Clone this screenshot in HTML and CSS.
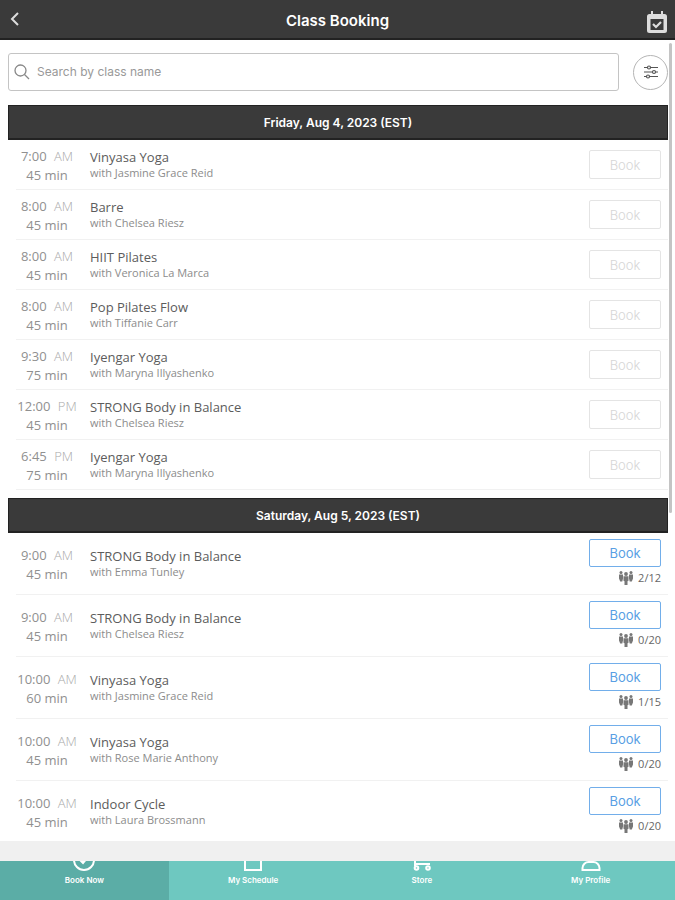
FILE: index.html
```html
<!DOCTYPE html>
<html lang="en">
<head>
<meta charset="utf-8">
<meta name="viewport" content="width=device-width, initial-scale=1">
<title>Class Booking</title>
<link rel="stylesheet" href="styles.css">
</head>
<body>
<svg class="sprite" aria-hidden="true">
  <symbol id="people" viewBox="0 0 14 14">
    <circle cx="2" cy="1.500" r="1.500"/><circle cx="12" cy="1.500" r="1.500"/><circle cx="7" cy="3" r="1.900"/>
    <path d="M0 3.500h4v4l-.7 3H1.200L0 7.500zM10 3.500h4v4l-1.200 3h-2.100l-.7-3zM4.500 5.300h5v4.500l-1 .4V14h-3v-3.800l-1-.4z"/>
  </symbol>
</svg>
<header class="topbar">
  <button class="icon-button" type="button" aria-label="Back">
    <svg width="12" height="16" viewBox="0 0 12 16"><path d="M10 2 4 8l6 6" fill="none" stroke="currentColor" stroke-width="2"/></svg>
  </button>
  <h1 class="title">Class Booking</h1>
  <button class="icon-button calendar" type="button" aria-label="My calendar">
    <svg width="20" height="23" viewBox="0 0 20 23"><path fill="currentColor" fill-rule="evenodd" d="M4 0h2v3h8V0h2v3h1.500a2.500 2.500 0 0 1 2.500 2.500v14a2.500 2.500 0 0 1-2.500 2.500h-15A2.500 2.500 0 0 1 0 19.500v-14A2.500 2.500 0 0 1 2.500 3H4zM3.500 8v11h13V8z"/><path d="m6 13 3 3 5-5" fill="none" stroke="currentColor" stroke-width="2.200"/></svg>
  </button>
</header>
<main class="content">
  <div class="tools">
    <label class="search">
      <svg width="16" height="16" viewBox="0 0 16 16" fill="none" stroke="currentColor" stroke-width="1.300"><circle cx="6.500" cy="6.500" r="5.500"/><path d="m10.500 10.500 4.500 4.500"/></svg>
      <input class="search-input" type="search" placeholder="Search by class name" aria-label="Search by class name">
    </label>
    <button class="filter" type="button" aria-label="Filter">
      <svg width="14" height="14" viewBox="0 0 14 14" fill="#fff" stroke="currentColor" stroke-width="1.200"><path d="M0 2.500h14M0 7h14M0 11.500h14"/><circle cx="5" cy="2.500" r="1.500"/><circle cx="10" cy="7" r="1.500"/><circle cx="4" cy="11.500" r="1.500"/></svg>
    </button>
  </div>

  <section class="day">
    <h2 class="date">Friday, Aug 4, 2023 (EST)</h2>
    <ul class="classes">
      <li class="class"><div class="when"><span>7:00 <span class="period">AM</span></span><span>45 min</span></div><div class="info"><h3 class="name">Vinyasa Yoga</h3><p class="coach">with Jasmine Grace Reid</p></div><div class="action"><button class="book" type="button" disabled>Book</button></div></li>
      <li class="class"><div class="when"><span>8:00 <span class="period">AM</span></span><span>45 min</span></div><div class="info"><h3 class="name">Barre</h3><p class="coach">with Chelsea Riesz</p></div><div class="action"><button class="book" type="button" disabled>Book</button></div></li>
      <li class="class"><div class="when"><span>8:00 <span class="period">AM</span></span><span>45 min</span></div><div class="info"><h3 class="name">HIIT Pilates</h3><p class="coach">with Veronica La Marca</p></div><div class="action"><button class="book" type="button" disabled>Book</button></div></li>
      <li class="class"><div class="when"><span>8:00 <span class="period">AM</span></span><span>45 min</span></div><div class="info"><h3 class="name">Pop Pilates Flow</h3><p class="coach">with Tiffanie Carr</p></div><div class="action"><button class="book" type="button" disabled>Book</button></div></li>
      <li class="class"><div class="when"><span>9:30 <span class="period">AM</span></span><span>75 min</span></div><div class="info"><h3 class="name">Iyengar Yoga</h3><p class="coach">with Maryna Illyashenko</p></div><div class="action"><button class="book" type="button" disabled>Book</button></div></li>
      <li class="class"><div class="when"><span>12:00 <span class="period">PM</span></span><span>45 min</span></div><div class="info"><h3 class="name">STRONG Body in Balance</h3><p class="coach">with Chelsea Riesz</p></div><div class="action"><button class="book" type="button" disabled>Book</button></div></li>
      <li class="class"><div class="when"><span>6:45 <span class="period">PM</span></span><span>75 min</span></div><div class="info"><h3 class="name">Iyengar Yoga</h3><p class="coach">with Maryna Illyashenko</p></div><div class="action"><button class="book" type="button" disabled>Book</button></div></li>
    </ul>
  </section>

  <section class="day">
    <h2 class="date">Saturday, Aug 5, 2023 (EST)</h2>
    <ul class="classes">
      <li class="class open"><div class="when"><span>9:00 <span class="period">AM</span></span><span>45 min</span></div><div class="info"><h3 class="name">STRONG Body in Balance</h3><p class="coach">with Emma Tunley</p></div><div class="action"><button class="book" type="button">Book</button><span class="spots"><svg class="people"><use href="#people"/></svg>2/12</span></div></li>
      <li class="class open"><div class="when"><span>9:00 <span class="period">AM</span></span><span>45 min</span></div><div class="info"><h3 class="name">STRONG Body in Balance</h3><p class="coach">with Chelsea Riesz</p></div><div class="action"><button class="book" type="button">Book</button><span class="spots"><svg class="people"><use href="#people"/></svg>0/20</span></div></li>
      <li class="class open"><div class="when"><span>10:00 <span class="period">AM</span></span><span>60 min</span></div><div class="info"><h3 class="name">Vinyasa Yoga</h3><p class="coach">with Jasmine Grace Reid</p></div><div class="action"><button class="book" type="button">Book</button><span class="spots"><svg class="people"><use href="#people"/></svg>1/15</span></div></li>
      <li class="class open"><div class="when"><span>10:00 <span class="period">AM</span></span><span>45 min</span></div><div class="info"><h3 class="name">Vinyasa Yoga</h3><p class="coach">with Rose Marie Anthony</p></div><div class="action"><button class="book" type="button">Book</button><span class="spots"><svg class="people"><use href="#people"/></svg>0/20</span></div></li>
      <li class="class open"><div class="when"><span>10:00 <span class="period">AM</span></span><span>45 min</span></div><div class="info"><h3 class="name">Indoor Cycle</h3><p class="coach">with Laura Brossmann</p></div><div class="action"><button class="book" type="button">Book</button><span class="spots"><svg class="people"><use href="#people"/></svg>0/20</span></div></li>
    </ul>
  </section>
  <div class="scroll-thumb"></div>
</main>
<nav class="tabs" aria-label="Main">
  <a class="tab active" href="#book"><svg class="tab-icon" viewBox="0 0 24 10"><circle cx="12" cy="-1" r="10"/><path d="m8-1 3 3 5-6"/></svg>Book Now</a>
  <a class="tab" href="#schedule"><svg class="tab-icon" viewBox="0 0 24 10"><path d="M4-4V9h16V-4"/></svg>My Schedule</a>
  <a class="tab" href="#store"><svg class="tab-icon" viewBox="0 0 24 10"><path d="M5-2v7M5 3h15"/><circle cx="6.500" cy="7" r="1.800"/><circle cx="18" cy="7" r="1.800"/></svg>Store</a>
  <a class="tab" href="#profile"><svg class="tab-icon" viewBox="0 0 24 10"><path d="M3.500 9v-2c0-3.500 3-6 6-6h5c3 0 6 2.500 6 6v2z"/></svg>My Profile</a>
</nav>
</body>
</html>
```

FILE: styles.css
```css
* { box-sizing: border-box; }

body {
  margin: 0;
  height: 100vh;
  display: flex;
  flex-direction: column;
  overflow: hidden;
  background: #fff;
  color: #555;
  font-family: "Open Sans", sans-serif;
}

h1, h2, h3, p, ul { margin: 0; padding: 0; }
ul { list-style: none; }
button { padding: 0; font: inherit; cursor: pointer; }

.sprite { display: none; }

.topbar {
  flex: none;
  height: 40px;
  display: grid;
  grid-template-columns: 40px 1fr 40px;
  align-items: center;
  padding: 0 8px;
  background: #3a3a3a;
  border-bottom: 2px solid #222;
  color: #fff;
}

.title {
  padding-top: 4px;
  text-align: center;
  font: 600 15px/20px Inter, sans-serif;
}

.icon-button {
  justify-self: start;
  display: flex;
  border: 0;
  background: none;
  color: #ddd;
}

.calendar { justify-self: end; padding-top: 6px; }

.content {
  position: relative;
  flex: 1;
  min-height: 0;
  overflow: hidden;
  padding: 13px 7px 0 8px;
}

.tools {
  display: flex;
  align-items: center;
  gap: 14px;
  margin-bottom: 14px;
}

.search {
  flex: 1;
  height: 38px;
  display: flex;
  align-items: center;
  gap: 7px;
  padding: 0 5px;
  border: 1px solid #c4c4c4;
  border-radius: 3px;
  color: #888;
}

.search-input {
  flex: 1;
  min-width: 0;
  padding: 0;
  border: 0;
  outline: 0;
  background: none;
  color: #555;
  font: 400 12px/20px Inter, sans-serif;
}

.search-input::placeholder { color: #999; opacity: 1; }

.filter {
  width: 35px;
  height: 35px;
  display: flex;
  align-items: center;
  justify-content: center;
  border: 1px solid #b5b5b5;
  border-radius: 50%;
  background: #fff;
  color: #555;
}

.day { margin-bottom: 8px; }

.date {
  height: 35px;
  border: 1px solid #222;
  border-bottom-width: 2px;
  background: #3a3a3a;
  color: #fff;
  text-align: center;
  font: 600 12px/34px Inter, sans-serif;
}

.class {
  height: 50px;
  display: grid;
  grid-template-columns: 62px 1fr 72px;
  align-items: center;
  column-gap: 12px;
  margin-left: 8px;
  padding-right: 7px;
  border-bottom: 1px solid #f1f1f1;
}

.class.open { height: 62px; }

.when {
  display: flex;
  flex-direction: column;
  align-items: center;
  padding-top: 3px;
  color: #909090;
  font-size: 13px;
  line-height: 19px;
  white-space: nowrap;
}

.period {
  margin-left: 4px;
  color: #aaa;
  font-weight: 300;
}

.info { padding-top: 1px; }

.name {
  color: #5c5c5c;
  font-size: 13px;
  font-weight: 400;
  line-height: 16px;
}

.coach {
  color: #8c8c8c;
  font-size: 11px;
  line-height: 16px;
}

.action {
  display: flex;
  flex-direction: column;
  align-items: flex-end;
  gap: 2px;
}

.book {
  width: 100%;
  height: 29px;
  border: 1px solid #72aeea;
  border-radius: 2px;
  background: #fff;
  color: #5a9fe4;
  font: 400 13px/20px Inter, sans-serif;
}

.book:disabled {
  border-color: #e4e4e4;
  color: #d6d6d6;
  font-weight: 300;
  cursor: default;
}

.open .book { height: 28px; }

.spots {
  display: flex;
  align-items: center;
  gap: 5px;
  padding-bottom: 2px;
  color: #666;
  font-size: 11px;
  line-height: 18px;
}

.people {
  width: 14px;
  height: 14px;
  fill: #777;
}

.scroll-thumb {
  position: absolute;
  top: 3px;
  right: 3px;
  width: 3px;
  height: 470px;
  border-radius: 2px;
  background: #c4c4c4;
}

.tabs {
  flex: none;
  display: grid;
  grid-template-columns: repeat(4, 1fr);
  height: 59px;
  border-top: 20px solid #f0f0f0;
  background: #6ec8c0;
}

.tab {
  display: flex;
  flex-direction: column;
  align-items: center;
  gap: 4px;
  color: #fff;
  font: 600 8px/10px Inter, sans-serif;
  text-decoration: none;
}

.tab.active { background: #5bada6; }

.tab-icon {
  width: 24px;
  height: 10px;
  overflow: hidden;
  fill: none;
  stroke: #fff;
  stroke-width: 2;
}
```
